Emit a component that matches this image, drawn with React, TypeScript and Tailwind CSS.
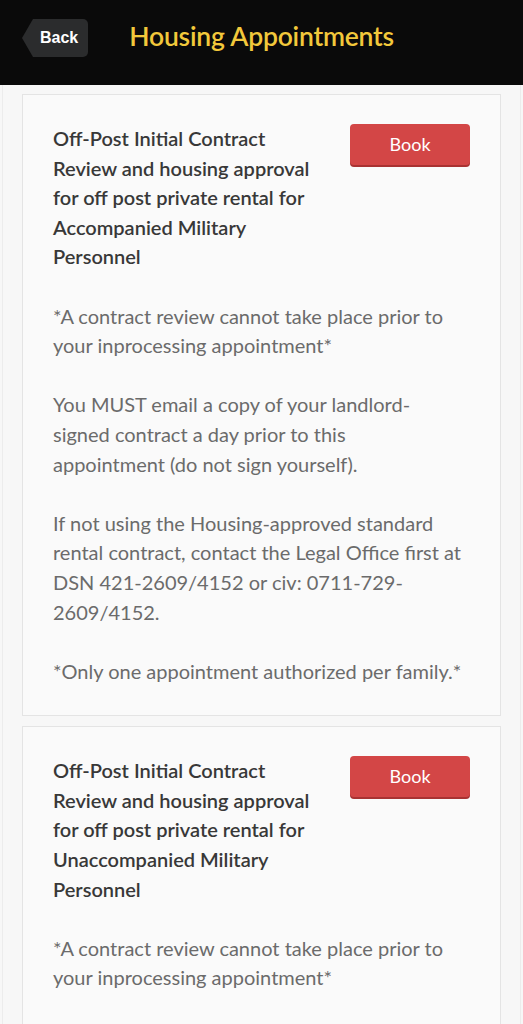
import React from "react";

const paras: React.ReactNode[] = [
  "*A contract review cannot take place prior to your inprocessing appointment*",
  <>
    You MUST email a copy of your landlord-signed contract a day prior to this
    <br />
    appointment (do not sign yourself).
  </>,
  "If not using the Housing-approved standard rental contract, contact the Legal Office first at DSN 421-2609/4152 or civ: 0711-729-2609/4152.",
  "*Only one appointment authorized per family.*",
];

const cards = [
  {
    title:
      "Off-Post Initial Contract Review and housing approval for off post private rental for Accompanied Military Personnel",
  },
  {
    title:
      "Off-Post Initial Contract Review and housing approval for off post private rental for Unaccompanied Military Personnel",
  },
];

export default function App() {
  return (
    <div className="h-[1024px] overflow-hidden bg-[#f7f7f7] font-['Lato',sans-serif]">
      <header className="h-[85px] bg-[#0a0a0a] flex items-center pl-[22px]">
        <div className="relative flex items-center h-[38px] mt-[-10px]">
          <div className="w-0 h-0 border-y-[19px] border-y-transparent border-r-[11px] border-r-[#2b2c2d]" />
          <div className="h-[38px] pl-[7px] pr-[10px] bg-[#2b2c2d] rounded-r-[5px] flex items-center text-white font-bold text-[16px] font-['Liberation_Sans',sans-serif]">
            Back
          </div>
        </div>
        <h1 className="ml-[41px] mt-[-12px] text-[#f2c83b] text-[26.5px] font-semibold tracking-[-0.2px]">
          Housing Appointments
        </h1>
      </header>
      <div className="mx-[2px] border-x border-[#ececec] px-[19px] pt-[9px] flex flex-col gap-[10px]">
        {cards.map((c, i) => (
          <div
            key={i}
            className="bg-[#fafafa] border border-[#e4e4e4] px-[30px] pt-[29px] pb-[29px] leading-[29.6px]"
          >
            <div className="flex items-start justify-between">
              <div className="w-[276px] text-[#383838] text-[20px] font-semibold">
                {c.title}
              </div>
              <button className="w-[120px] h-[41px] rounded-[4px] bg-[#d34646] text-white text-[18px] shadow-[0_2px_0_#a83232]">
                Book
              </button>
            </div>
            <div className="mt-[29.6px] max-w-[410px] flex flex-col gap-[29.6px] text-[#6b6b6b] text-[20px]">
              {paras.map((p, j) => (
                <p key={j}>{p}</p>
              ))}
            </div>
          </div>
        ))}
      </div>
    </div>
  );
}
